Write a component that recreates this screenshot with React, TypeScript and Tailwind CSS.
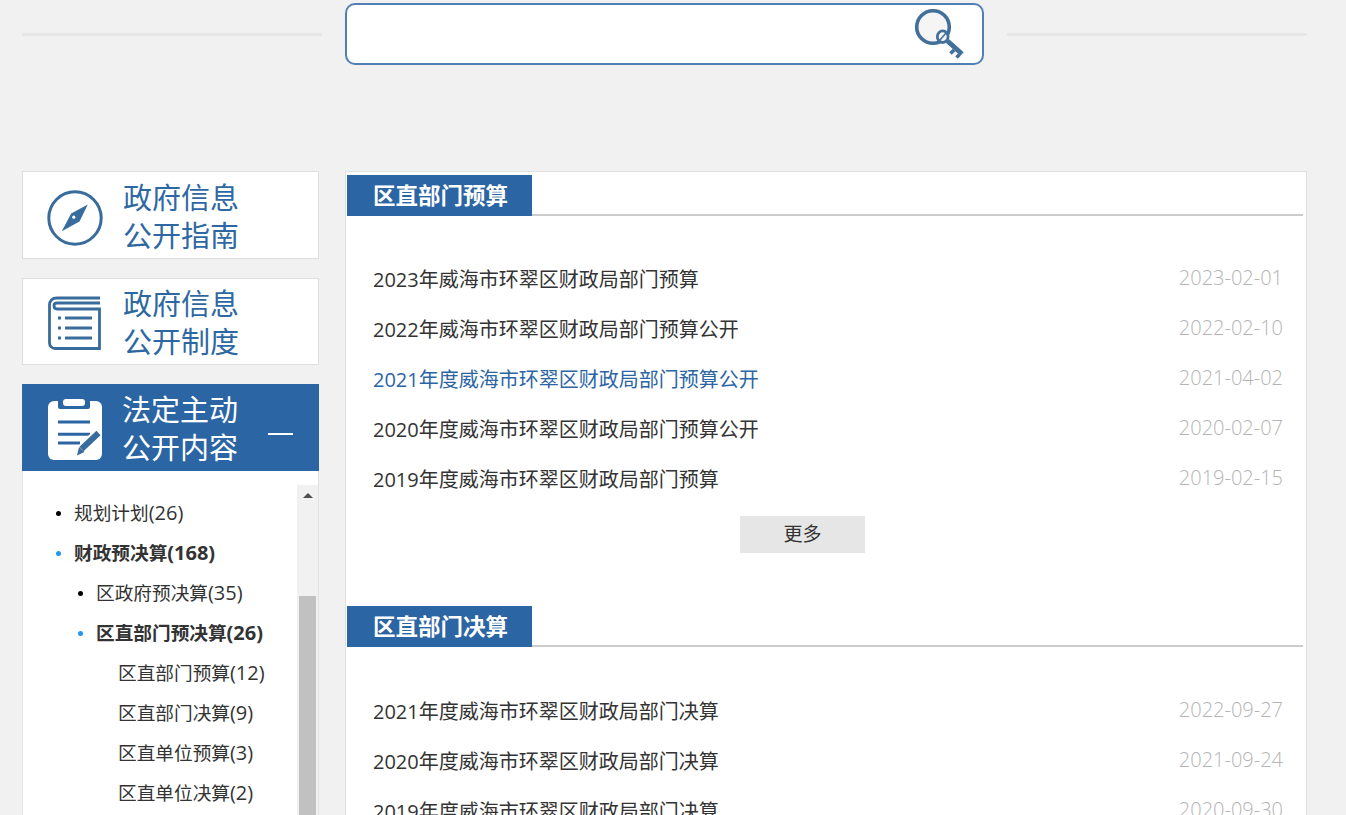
const budgetRows = [
  { title: '2023年威海市环翠区财政局部门预算', date: '2023-02-01' },
  { title: '2022年威海市环翠区财政局部门预算公开', date: '2022-02-10' },
  { title: '2021年度威海市环翠区财政局部门预算公开', date: '2021-04-02', active: true },
  { title: '2020年度威海市环翠区财政局部门预算公开', date: '2020-02-07' },
  { title: '2019年度威海市环翠区财政局部门预算', date: '2019-02-15' },
];

const finalRows = [
  { title: '2021年度威海市环翠区财政局部门决算', date: '2022-09-27' },
  { title: '2020年度威海市环翠区财政局部门决算', date: '2021-09-24' },
  { title: '2019年度威海市环翠区财政局部门决算', date: '2020-09-30' },
];

const CompassIcon = () => (
  <svg className="mt-[2px]" width="58" height="58" viewBox="0 0 58 58" fill="none">
    <circle cx="29" cy="29" r="26.2" stroke="#386c9c" strokeWidth="3" />
    <path d="M41.8 15.5 L33.5 32.5 L15.8 42.2 L25.2 24.5 Z" fill="#386c9c" />
    <circle cx="27.8" cy="28.2" r="1.6" fill="#fff" />
  </svg>
);

const ListIcon = () => (
  <svg width="53" height="54" viewBox="0 0 53 54" fill="none">
    <path d="M52 2 H9 C4 2 1.5 5 1.5 9 V47 C1.5 50 4 52.5 7 52.5 H51.5 V13 H9 C7 13 6 12 6 9.5 C6 7.5 7 7 9 7 H52" stroke="#386c9c" strokeWidth="2.8" />
    <path d="M17 22 H44 M17 32 H44 M17 42 H44" stroke="#386c9c" strokeWidth="3" />
    <path d="M10 22 H13 M10 32 H13 M10 42 H13" stroke="#386c9c" strokeWidth="3" />
  </svg>
);

const NoteIcon = () => (
  <svg width="54" height="61" viewBox="0 0 54 61" fill="none">
    <rect x="0" y="2" width="54" height="59" rx="6" fill="#fff" />
    <rect x="10" y="0" width="32" height="10" rx="2" fill="#2c65a4" />
    <rect x="15" y="0" width="22" height="7" rx="3" fill="#fff" />
    <path d="M10 23 H42 M10 35.3 H42 M10 44 H32" stroke="#2c65a4" strokeWidth="3" />
    <path d="M33.5 50 L50 33.5" stroke="#fff" strokeWidth="9" />
    <path d="M33.5 50 L50.5 34" stroke="#386c9c" strokeWidth="6" />
    <path d="M29 56.5 L31 48 L36.5 53 Z" fill="#386c9c" />
  </svg>
);

const KeySearchIcon = () => (
  <svg width="52" height="56" viewBox="0 0 52 56" fill="none">
    <circle cx="20" cy="20" r="16.3" fill="#f5f5f5" stroke="#41709a" strokeWidth="3.6" />
    <ellipse cx="29.7" cy="29.7" rx="5.4" ry="5.8" fill="#f5f5f5" stroke="#41709a" strokeWidth="2.8" />
    <path d="M26.5 33.5 L33 26" stroke="#41709a" strokeWidth="1.6" />
    <path d="M34.5 34 L49 47" stroke="#41709a" strokeWidth="5" />
    <path d="M41 43 L37.5 46.5 M46.5 47.5 L43.5 50.5" stroke="#41709a" strokeWidth="3.6" />
  </svg>
);

const SideCard = ({ icon, lines, tall }: { icon: React.ReactNode; lines: string[]; tall?: boolean }) => (
  <div className={`${tall ? 'h-[88px]' : 'h-[87px]'} pt-[3px] bg-white border border-[#dfdfdf] flex items-center`}>
    <div className="w-[100px] flex justify-center pl-[3px] shrink-0">{icon}</div>
    <div className="text-[29px] leading-[38px] text-[#2e68a3]">
      {lines.map((l) => <div key={l}>{l}</div>)}
    </div>
  </div>
);

const TreeItem = ({ name, count, level, bullet, bold }: { name: string; count: string; level: 0 | 1 | 2; bullet?: 'black' | 'blue'; bold?: boolean }) => (
  <div className={`h-10 flex items-center text-[18.67px] text-[#333] ${level === 0 ? 'pl-[51px]' : level === 1 ? 'pl-[73px]' : 'pl-[95px]'} ${bold ? 'font-bold' : ''}`}>
    {bullet ? (
      <span className={`w-[5px] h-[5px] rounded-full -ml-[18px] mr-[13px] ${bullet === 'blue' ? 'bg-[#2196f3]' : 'bg-black'}`} />
    ) : null}
    {name}
    <span className="text-[20px]">{count}</span>
  </div>
);

const SectionHead = ({ title }: { title: string }) => (
  <div className="h-[41px] border-b-2 border-[#cccccc] flex items-start">
    <div className="w-[185px] h-[41px] bg-[#2c65a4] text-white text-[22.5px] font-bold leading-[41px] pl-[26px]">{title}</div>
  </div>
);

const NewsRow = ({ title, date, active }: { title: string; date: string; active?: boolean }) => (
  <div className="h-[50px] flex items-center justify-between pl-[26px] pr-[20px]">
    <span className={`text-[20px] pt-[2px] ${active ? 'text-[#2c65a4]' : 'text-[#333]'}`}>{title}</span>
    <span className="text-[20px] font-light text-[#b4b4b4] -translate-y-px">{date}</span>
  </div>
);

export default function App() {
  return (
    <div className="h-[815px] overflow-hidden bg-[#f1f1f1] font-['Open_Sans','Noto_Sans_CJK_SC',sans-serif]">
      <div className="h-[171px] pt-[3px] pl-[22px] pr-[39px] flex items-start">
        <div className="w-[300px] h-[3px] mt-[30px] bg-[#e6e6e6]" />
        <div className="w-[639px] h-[62px] ml-[23px] mr-[23px] bg-white border-2 border-[#4f7fb5] rounded-[10px] flex justify-end pr-[17px] pt-[2px]">
          <KeySearchIcon />
        </div>
        <div className="w-[300px] h-[3px] mt-[30px] bg-[#e6e6e6]" />
      </div>

      <div className="flex items-start pl-[22px] pr-[39px]">
        <div className="w-[297px] shrink-0">
          <SideCard tall icon={<CompassIcon />} lines={['政府信息', '公开指南']} />
          <div className="mt-[19px]">
            <SideCard icon={<ListIcon />} lines={['政府信息', '公开制度']} />
          </div>
          <div className="mt-[19px] h-[87px] pt-[3px] bg-[#2c65a4] flex items-center text-white">
            <div className="w-[100px] flex justify-center pl-[6px] shrink-0"><NoteIcon /></div>
            <div className="text-[29px] leading-[38px]">
              <div>法定主动</div>
              <div>公开内容</div>
            </div>
            <div className="w-[25px] h-[2px] mt-[9px] bg-white ml-[30px]" />
          </div>
          <div className="h-[400px] bg-white border-x border-[#e3e3e3] flex justify-between">
            <div className="pt-[22px]">
              <TreeItem name="规划计划" count="(26)" level={0} bullet="black" />
              <TreeItem name="财政预决算" count="(168)" level={0} bullet="blue" bold />
              <TreeItem name="区政府预决算" count="(35)" level={1} bullet="black" />
              <TreeItem name="区直部门预决算" count="(26)" level={1} bullet="blue" bold />
              <TreeItem name="区直部门预算" count="(12)" level={2} />
              <TreeItem name="区直部门决算" count="(9)" level={2} />
              <TreeItem name="区直单位预算" count="(3)" level={2} />
              <TreeItem name="区直单位决算" count="(2)" level={2} />
            </div>
            <div className="w-[21px] mt-[14px] bg-[#f1f1f1] flex flex-col items-center">
              <span className="mt-[8px] w-0 h-0 border-x-[5px] border-x-transparent border-b-[5px] border-b-[#505050]" />
              <div className="w-[17px] h-[300px] mt-[98px] bg-[#c1c1c1]" />
            </div>
          </div>
        </div>

        <div className="ml-[26px] w-[962px] h-[700px] bg-white border border-[#dfdfdf] pt-[3px] pl-[1px] pr-[3px]">
          <SectionHead title="区直部门预算" />
          <div className="mt-[38px]">
            {budgetRows.map((r) => <NewsRow key={r.title} {...r} />)}
          </div>
          <div className="mt-[12px] ml-[393px] w-[125px] h-[37px] bg-[#e6e6e6] text-[#333] text-[19px] flex items-center justify-center">更多</div>
          <div className="mt-[53px]">
            <SectionHead title="区直部门决算" />
          </div>
          <div className="mt-[39px]">
            {finalRows.map((r) => <NewsRow key={r.title} {...r} />)}
          </div>
        </div>
      </div>
    </div>
  );
}
